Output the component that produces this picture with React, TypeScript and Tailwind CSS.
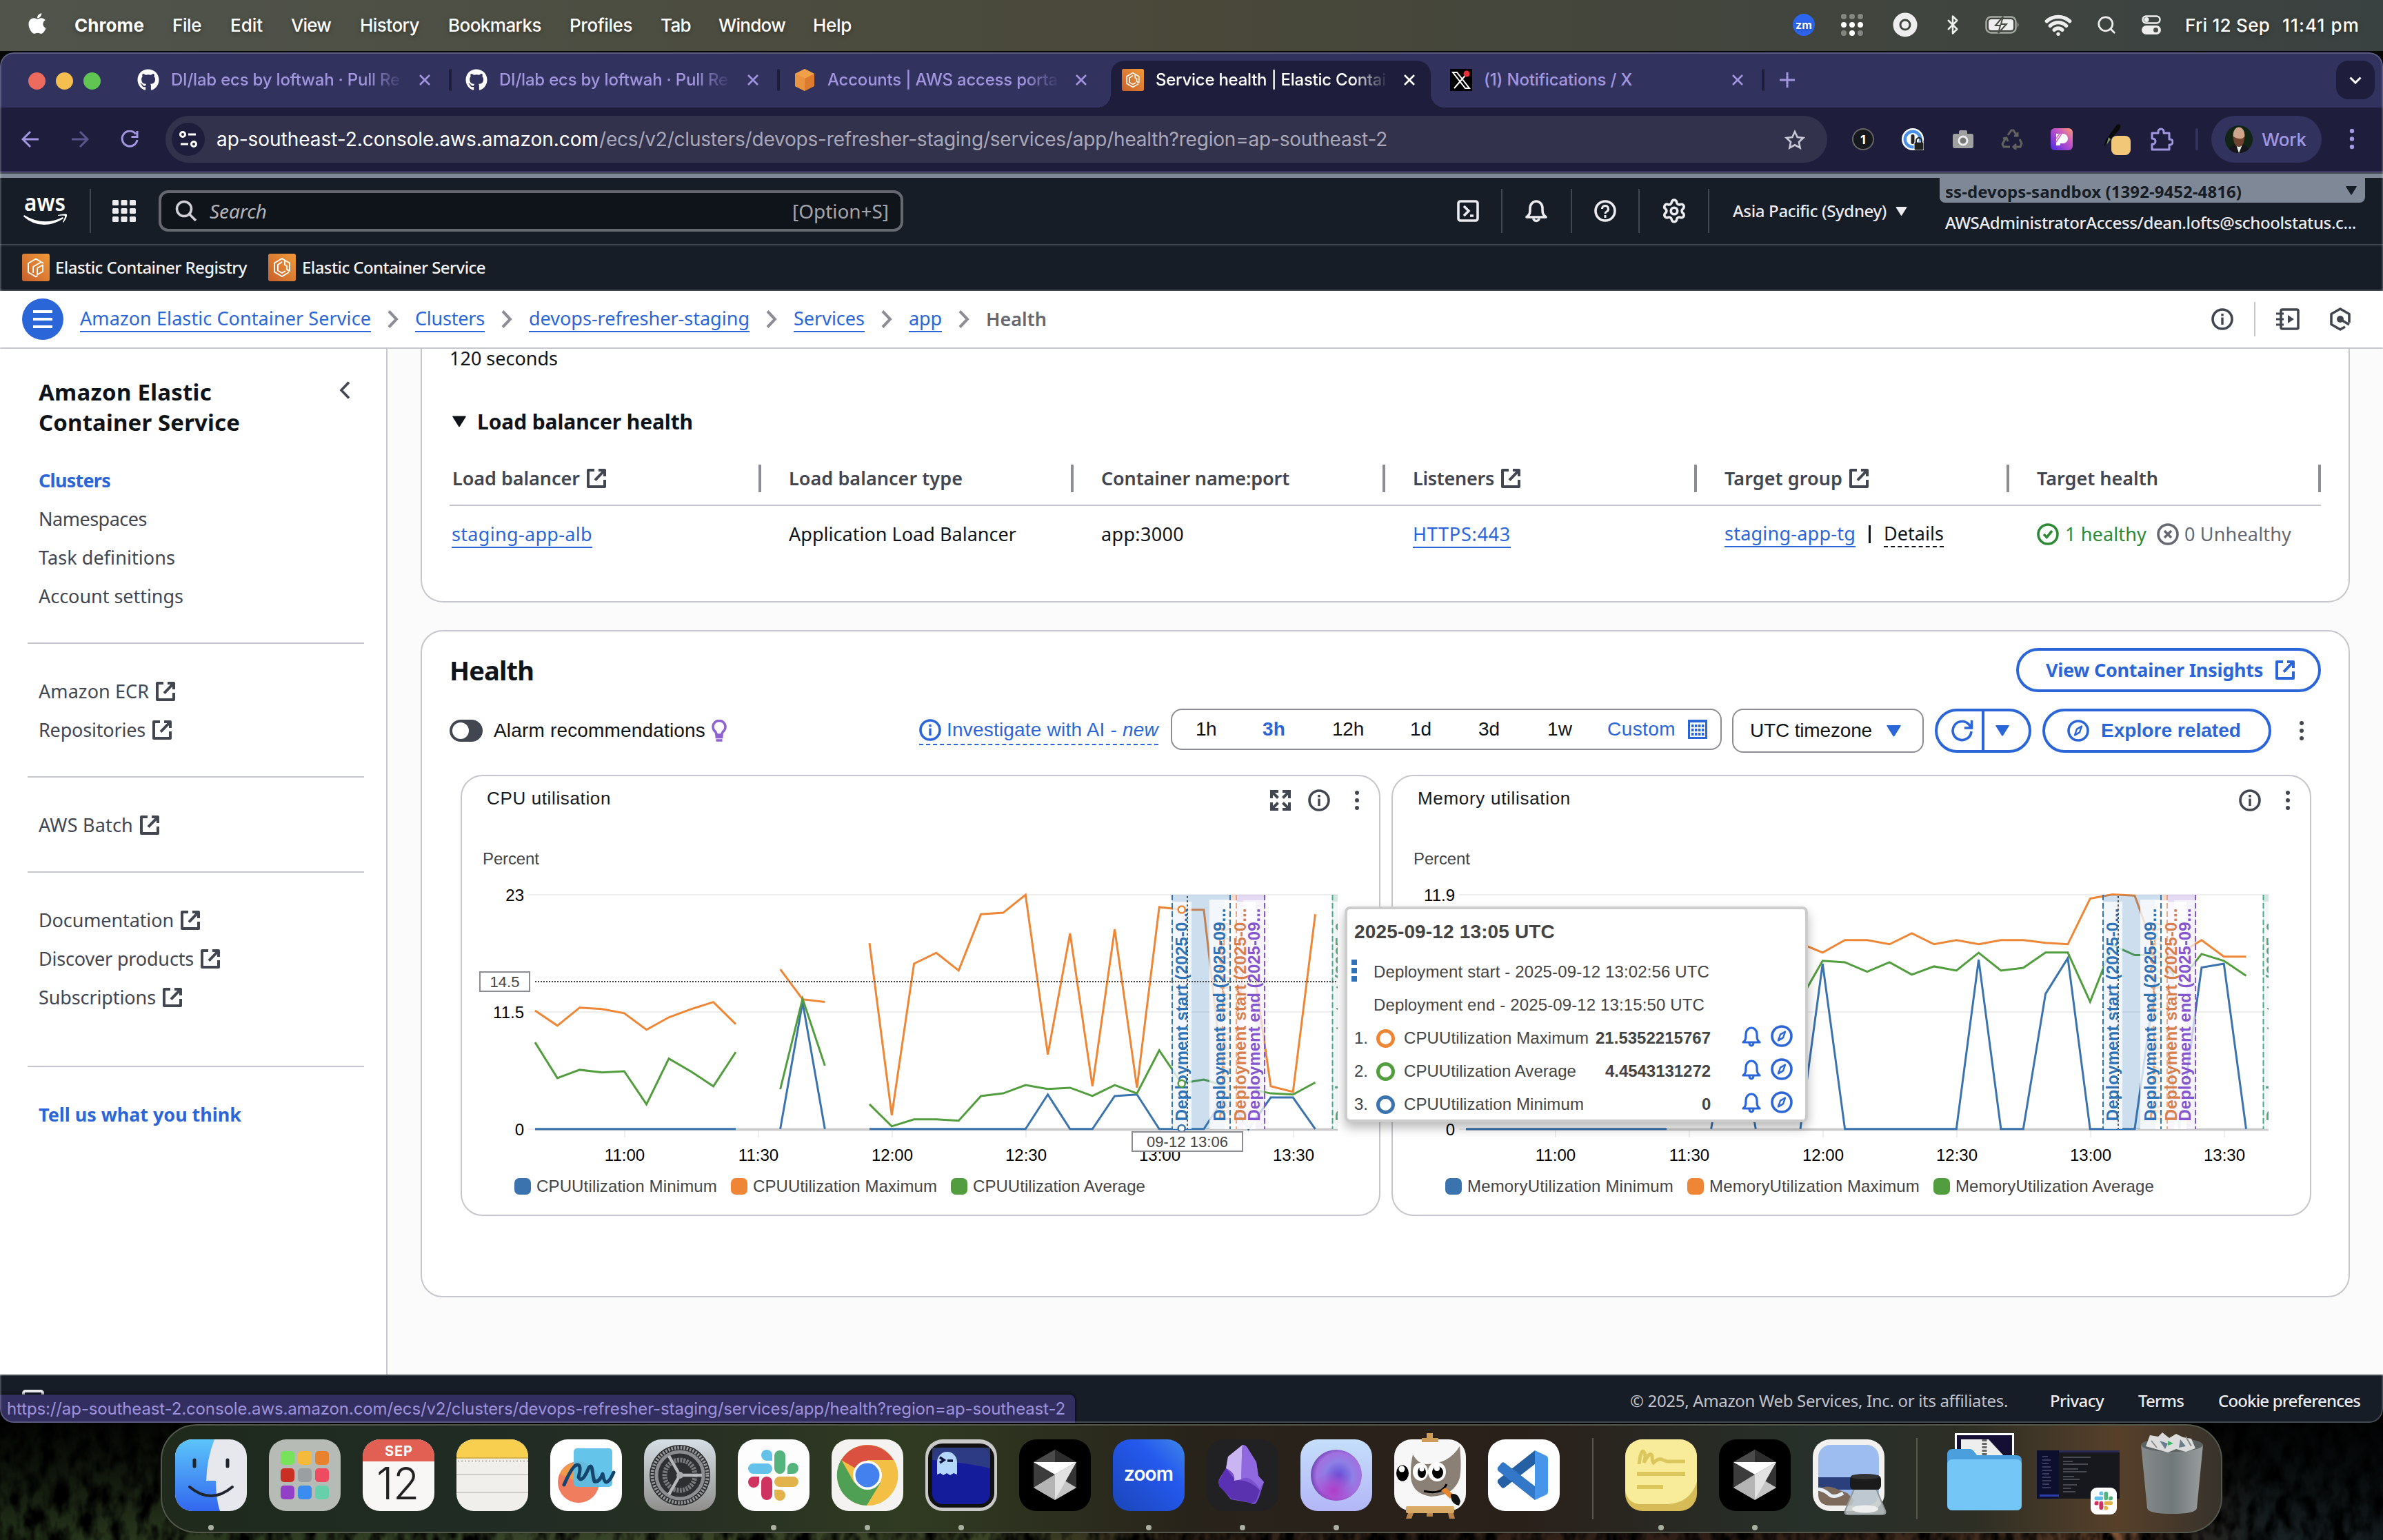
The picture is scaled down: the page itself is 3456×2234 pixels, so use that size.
import { useLayoutEffect, useRef } from "react";
import type { ReactNode } from "react";
import { FaApple, FaGithub } from "react-icons/fa";
import { Bluetooth, Search, Wifi, Settings } from "lucide-react";

type Kids = { children: ReactNode; className?: string };

/* Single line of text whose tracking is tuned to fill the width of its box. */
function T({ children, className = "" }: Kids) {
  const box = useRef<HTMLSpanElement>(null);
  const inner = useRef<HTMLSpanElement>(null);
  useLayoutEffect(() => {
    if (!box.current || !inner.current) return;
    inner.current.style.letterSpacing = "0px";
    const target = box.current.clientWidth;
    const natural = inner.current.getBoundingClientRect().width;
    const n = (inner.current.textContent || "").length;
    if (n > 1) inner.current.style.letterSpacing = `${(target - natural) / n}px`;
  }, []);
  return (
    <span ref={box} className={`inline-block shrink-0 whitespace-nowrap ${className}`}>
      <span ref={inner}>{children}</span>
    </span>
  );
}

/* ---------- small icons ---------- */

function External({ className = "" }: { className?: string }) {
  return (
    <svg viewBox="0 0 16 16" className={`h-[32px] w-[32px] shrink-0 ${className}`} fill="none" stroke="currentColor" strokeWidth="2">
      <path d="M9.500 2H14v4.500M7 9.300 13.600 2.400M14 9v5H2V2h4.500" strokeLinejoin="round" />
    </svg>
  );
}
function Info({ className = "" }: { className?: string }) {
  return (
    <svg viewBox="0 0 16 16" className={`h-[32px] w-[32px] shrink-0 ${className}`} fill="none" stroke="currentColor" strokeWidth="1.8">
      <circle cx="8" cy="8" r="7" />
      <path d="M8 6.8V12M8 4v1.7" strokeWidth="1.7" />
    </svg>
  );
}
function Kebab({ className = "" }: { className?: string }) {
  return (
    <svg viewBox="0 0 32 32" className={`h-[32px] w-[32px] shrink-0 ${className}`} fill="currentColor">
      <circle cx="16" cy="5" r="3" />
      <circle cx="16" cy="16" r="3" />
      <circle cx="16" cy="27" r="3" />
    </svg>
  );
}
function Compass({ className = "" }: { className?: string }) {
  return (
    <svg viewBox="0 0 16 16" className={`h-[32px] w-[32px] shrink-0 ${className}`} fill="none" stroke="currentColor" strokeWidth="1.8">
      <circle cx="8" cy="8" r="7" />
      <path d="M10.500 4.800 9 9.200 5.500 11.200 7 6.800z" strokeWidth="1.200" strokeLinejoin="round" />
    </svg>
  );
}
function Down({ className = "" }: { className?: string }) {
  return (
    <svg viewBox="0 0 20 16" className={`shrink-0 ${className}`} fill="currentColor">
      <path d="M1 0h18q1.2 0 .6 1.2L11 15q-1 1.4-2 0L.4 1.2Q-.2 0 1 0z" />
    </svg>
  );
}
function Chevron() {
  return (
    <svg viewBox="0 0 16 26" className="h-[26px] w-[16px] shrink-0 text-[#8c8c94]" fill="none" stroke="currentColor" strokeWidth="4">
      <path d="M2 1.500 13 13 2 24.500" />
    </svg>
  );
}
function EcsBadge({ kind, className = "" }: { kind: "ecr" | "ecs"; className?: string }) {
  return (
    <svg viewBox="0 0 40 40" className={`shrink-0 ${className}`} fill="none" stroke="#fff" strokeWidth="2" strokeLinejoin="round">
      <defs>
        <linearGradient id={`badge-${kind}`} x1="0" y1="1" x2="1" y2="0">
          <stop offset="0" stopColor="#c8602a" />
          <stop offset="1" stopColor="#f09a3a" />
        </linearGradient>
      </defs>
      <rect width="40" height="40" rx="3" fill={`url(#badge-${kind})`} stroke="none" />
      {kind === "ecr" ? (
        <path d="M31 14 20 7.500 9 14v13l11 6.500 2.500-1.500M16 28v-9l12-7M22 28v-7l8-4.500v9.500l-8 4.500z" />
      ) : (
        <path d="M24 9.500 20 7 9 13.500v13L20 33l10-6M31 25V13.500l-7-4v6.500l3 2v5zM20 12l-6 4v8.500l6 3.500 5-3" />
      )}
    </svg>
  );
}
function CloseX({ className = "" }: { className?: string }) {
  return (
    <svg viewBox="0 0 16 16" className={`h-[16px] w-[16px] shrink-0 ${className}`} stroke="currentColor" strokeWidth="2.600">
      <path d="M1 1l14 14M15 1 1 15" />
    </svg>
  );
}
function BellBlue() {
  return (
    <svg viewBox="0 0 28 32" className="h-[32px] w-[28px] shrink-0 text-[#2b66d9]" fill="none" stroke="currentColor" strokeWidth="3.200" strokeLinejoin="round">
      <path d="M2 25c4-3 4-6 4-12a8 9 0 0 1 16 0c0 6 0 9 4 12z" />
      <path d="M11 26a3 4 0 0 0 6 0" />
    </svg>
  );
}

/* ---------- macOS menu bar ---------- */

function MenuBar() {
  return (
    <div className="relative flex h-[74px] w-full shrink-0 items-center bg-gradient-to-r from-[#50544b] via-[#494839] to-[#3a4241] pb-[2px] font-['Inter',sans-serif] text-[26px] font-medium text-white [text-shadow:0_2px_6px_rgba(0,0,0,.35)]">
      <FaApple className="mb-[4px] ml-[38px] h-[34px] w-[32px]" />
      <T className="ml-[38px] w-[101px] font-bold">Chrome</T>
      <T className="ml-[41px] w-[42px]">File</T>
      <T className="ml-[42px] w-[47px]">Edit</T>
      <T className="ml-[41px] w-[58px]">View</T>
      <T className="ml-[42px] w-[86px]">History</T>
      <T className="ml-[42px] w-[135px]">Bookmarks</T>
      <T className="ml-[41px] w-[91px]">Profiles</T>
      <T className="ml-[41px] w-[44px]">Tab</T>
      <T className="ml-[40px] w-[97px]">Window</T>
      <T className="ml-[40px] w-[56px]">Help</T>
      <span className="ml-auto flex h-[32px] w-[32px] items-center justify-center rounded-full bg-[#2d66ee] text-[16px] font-bold">zm</span>
      <svg viewBox="0 0 34 34" className="ml-[37px] h-[34px] w-[34px]" fill="#fff">
        {[5, 17, 29].map((y) => [5, 17, 29].map((x) => <circle key={`${x}${y}`} cx={x} cy={y} r="4" opacity={y === 17 || (y === 29 && x === 17) ? 1 : 0.35} />))}
      </svg>
      <svg viewBox="0 0 36 36" className="ml-[42px] h-[36px] w-[36px]">
        <circle cx="18" cy="18" r="13" fill="none" stroke="#eee" strokeWidth="9" />
        <circle cx="18" cy="18" r="5.500" fill="#eee" />
      </svg>
      <Bluetooth className="ml-[36px] h-[32px] w-[30px] text-[#eee]" strokeWidth={2} />
      <svg viewBox="0 0 50 26" className="ml-[32px] h-[26px] w-[50px]">
        <rect x="1.500" y="1.500" width="43" height="23" rx="7" fill="none" stroke="#a5a7a2" strokeWidth="2.500" />
        <rect x="5" y="5" width="36" height="16" rx="4" fill="#eee" />
        <path d="M47 9q3 4 0 8z" fill="#a5a7a2" />
        <path d="M26 1 15 14h7l-3 11 12-13h-8z" fill="#eee" stroke="#454a43" strokeWidth="2" />
      </svg>
      <Wifi className="ml-[36px] h-[40px] w-[40px] text-[#eee]" strokeWidth={3.2} />
      <Search className="ml-[35px] h-[30px] w-[30px] text-[#eee]" strokeWidth={2.2} />
      <svg viewBox="0 0 28 28" className="ml-[36px] h-[28px] w-[28px]">
        <rect x="1.500" y="1.500" width="25" height="10" rx="5" fill="none" stroke="#eee" strokeWidth="2.400" />
        <circle cx="7" cy="6.500" r="3.500" fill="#eee" />
        <rect x="0" y="15" width="28" height="13" rx="6.500" fill="#eee" />
        <circle cx="20.500" cy="21.500" r="3.500" fill="#454a43" />
      </svg>
      <T className="ml-[35px] w-[123px]">Fri 12 Sep</T>
      <T className="ml-[18px] mr-[34px] w-[112px]">11:41 pm</T>
    </div>
  );
}

/* ---------- browser chrome ---------- */

function Tab({ icon, title, width, active, last }: { icon: ReactNode; title: string; width: string; active?: boolean; last?: boolean }) {
  return (
    <div className={`relative flex h-full w-[476px] shrink-0 items-center pl-[22px] ${active ? "text-white" : "text-[#a396e0]"}`}>
      {active && (
        <>
          <span className="absolute bottom-0 left-[6px] right-[6px] top-[10px] rounded-t-[20px] bg-[#1e1e3c]" />
          <span className="absolute bottom-0 left-[-14px] h-[20px] w-[20px] bg-[radial-gradient(circle_at_0_0,transparent_20px,#1e1e3c_20px)]" />
          <span className="absolute bottom-0 right-[-14px] h-[20px] w-[20px] bg-[radial-gradient(circle_at_100%_0,transparent_20px,#1e1e3c_20px)]" />
        </>
      )}
      <span className="relative -mt-[2px] flex h-[32px] w-[32px] items-center justify-center">{icon}</span>
      <span className={`relative -mt-[3px] ml-[17px] w-[334px] overflow-hidden ${last ? "" : "[mask-image:linear-gradient(to_right,#000_85%,transparent_101%)]"}`}>
        <T className={`${width} align-middle`}>{title}</T>
      </span>
      <CloseX className="relative -mt-[2px] ml-[26px]" />
    </div>
  );
}

function TabStrip() {
  const sep = <span className="-mx-[2px] -mt-[2px] h-[32px] w-[4px] shrink-0 rounded bg-[#1e1e3c]" />;
  return (
    <div className="flex h-[80px] shrink-0 items-center bg-[#32325f] pt-[2px] font-['Inter',sans-serif] text-[24px] font-medium">
      <span className="ml-[41px] h-[25px] w-[25px] rounded-full bg-[#ed6a5e]" />
      <span className="ml-[15px] h-[25px] w-[25px] rounded-full bg-[#f5bf4f]" />
      <span className="ml-[15px] mr-[31px] h-[25px] w-[25px] rounded-full bg-[#61c554]" />
      <Tab icon={<FaGithub className="h-[32px] w-[32px] text-white" />} title="DI/lab ecs by loftwah · Pull Re" width="w-[332px]" />
      {sep}
      <Tab icon={<FaGithub className="h-[32px] w-[32px] text-white" />} title="DI/lab ecs by loftwah · Pull Re" width="w-[332px]" />
      {sep}
      <Tab
        icon={
          <svg viewBox="0 0 32 32" className="h-[32px] w-[32px]">
            <path d="M16 0 30 7v18l-14 7-14-7V7z" fill="#dd7c2e" />
            <path d="M16 0 30 7l-14 7L2 7z" fill="#f0a048" />
            <path d="M16 14 2 7v18l14 7z" fill="#ea9340" />
          </svg>
        }
        title="Accounts | AWS access porta"
        width="w-[334px]"
      />
      <Tab active icon={<EcsBadge kind="ecs" className="h-[32px] w-[32px]" />} title="Service health | Elastic Contai" width="w-[334px]" />
      <Tab
        last
        icon={
          <svg viewBox="0 0 32 32" className="h-[32px] w-[32px]">
            <rect width="32" height="32" fill="#000" />
            <path d="M4 5h6l18 23h-6zM26 5 6 28" stroke="#fff" strokeWidth="2" fill="none" />
            <circle cx="24" cy="7" r="4.500" fill="#e5333c" />
          </svg>
        }
        title="(1) Notifications / X"
        width="w-[215px]"
      />
      {sep}
      <svg viewBox="0 0 22 22" className="-mt-[2px] ml-[24px] h-[22px] w-[22px]" stroke="#a396e0" strokeWidth="3">
        <path d="M11 0v22M0 11h22" />
      </svg>
      <span className="-mt-[2px] ml-auto mr-[12px] flex h-[56px] w-[56px] items-center justify-center rounded-[18px] bg-[#1e1e3c]">
        <svg viewBox="0 0 18 11" className="h-[11px] w-[18px]" fill="none" stroke="#fff" strokeWidth="3">
          <path d="m1.500 1.500 7.500 7.500 7.500-7.500" />
        </svg>
      </span>
    </div>
  );
}

function Toolbar() {
  return (
    <div className="flex h-[92px] shrink-0 items-center bg-[#1e1e3c] font-['Inter',sans-serif]">
      <svg viewBox="0 0 26 26" className="ml-[31px] h-[26px] w-[26px]" fill="none" stroke="#a396e0" strokeWidth="3">
        <path d="M25 13H2M13 2 2 13l11 11" />
      </svg>
      <svg viewBox="0 0 26 26" className="ml-[46px] h-[26px] w-[26px]" fill="none" stroke="#5c5690" strokeWidth="3">
        <path d="M1 13h23M13 2l11 11-11 11" />
      </svg>
      <svg viewBox="0 0 26 26" className="ml-[46px] h-[26px] w-[26px]" fill="none" stroke="#a396e0" strokeWidth="3">
        <path d="M22 5.500A11 11 0 1 0 24 14M24 1v8.500h-8.500" />
      </svg>
      <div className="ml-[39px] flex h-[68px] w-[2410px] shrink-0 items-center rounded-full bg-[#33324d] pl-[9px]">
        <span className="flex h-[48px] w-[48px] items-center justify-center rounded-full bg-[#1e1e3c]">
          <svg viewBox="0 0 28 24" className="h-[24px] w-[28px]" fill="none" stroke="#fff" strokeWidth="3">
            <circle cx="6" cy="5" r="3.500" />
            <path d="M14 5h11M3 19h11" />
            <circle cx="22" cy="19" r="3.500" />
          </svg>
        </span>
        <T className="ml-[17px] w-[554px] text-[28px] text-white">ap-southeast-2.console.aws.amazon.com</T>
        <T className="ml-[1px] w-[1143px] text-[28px] text-[#a9a8b8]">/ecs/v2/clusters/devops-refresher-staging/services/app/health?region=ap-southeast-2</T>
        <svg viewBox="0 0 30 29" className="ml-auto mr-[32px] h-[29px] w-[30px]" fill="none" stroke="#c9c8d4" strokeWidth="2.600">
          <path d="m15 3 3.700 8 8.500 1-6.300 6 1.700 8.500L15 22.300 7.400 26.500 9.100 18l-6.300-6 8.500-1z" />
        </svg>
      </div>
      <span className="ml-[36px] flex h-[32px] w-[32px] items-center justify-center rounded-full border-2 border-[#666] bg-[#15181c] text-[18px] font-bold text-white">1</span>
      <svg viewBox="0 0 32 32" className="ml-[40px] h-[32px] w-[32px]">
        <circle cx="16" cy="16" r="16" fill="#fff" />
        <circle cx="16" cy="16" r="11" fill="none" stroke="#4a90e8" strokeWidth="5" />
        <circle cx="16" cy="16" r="9" fill="#fff" />
        <rect x="13.500" y="9" width="5" height="14" rx="2" fill="#222" />
        <rect x="18" y="20" width="14" height="12" rx="2" fill="#222" stroke="#fff" />
        <path d="M21 21v-3a4 4 0 0 1 8 0v3" fill="none" stroke="#222" strokeWidth="2" />
      </svg>
      <svg viewBox="0 0 30 28" className="ml-[42px] h-[28px] w-[30px]">
        <rect y="6" width="30" height="21" rx="3" fill="#a0a0a0" />
        <rect x="9" y="1" width="12" height="8" rx="2" fill="#a0a0a0" />
        <circle cx="15" cy="16" r="6" fill="#777" stroke="#eee" strokeWidth="3" />
      </svg>
      <svg viewBox="0 0 32 30" className="ml-[40px] h-[30px] w-[32px]" fill="none" stroke="#62625f" strokeWidth="3">
        <path d="m10 9 5-7h3l5 8M19 10h5V5M27 15l3 6-2 5h-9M22 22l-4 4 4 4M13 26H4l-2-4 5-9M3 14l5-1 2 5" />
      </svg>
      <svg viewBox="0 0 32 32" className="ml-[40px] h-[32px] w-[32px]">
        <defs>
          <linearGradient id="pg" x1="0" y1="1" x2="1" y2="0">
            <stop offset="0" stopColor="#4a2be0" />
            <stop offset=".6" stopColor="#c654c8" />
            <stop offset="1" stopColor="#ffa06a" />
          </linearGradient>
        </defs>
        <rect width="32" height="32" rx="6" fill="url(#pg)" />
        <path d="M8 25V8h10a7 7 0 0 1 0 14h-4v3z" fill="#fff" />
        <path d="m8 15 5-7M8 20l8-12" stroke="#d060c0" strokeWidth="1.500" />
      </svg>
      <svg viewBox="0 0 44 46" className="ml-[42px] h-[46px] w-[44px]">
        <path d="M22 2q4-2 5 1t-3 8L8 28l-5 6 3-10z" fill="#0a0a0a" />
        <path d="m10 20 3 3-6 8z" fill="#7a9a6a" />
        <rect x="14" y="18" width="28" height="28" rx="8" fill="#f2c777" />
      </svg>
      <svg viewBox="0 0 34 34" className="ml-[26px] h-[34px] w-[34px]" fill="none" stroke="#a396e0" strokeWidth="3" strokeLinejoin="round">
        <path d="M3 8h9V6a4 4 0 0 1 8 0v2h8v9h1a4 4 0 0 1 0 8h-1v7H3v-8h1a4 4 0 0 0 0-8H3z" />
      </svg>
      <span className="ml-[32px] h-[32px] w-[4px] rounded bg-[#32325f]" />
      <div className="ml-[19px] flex h-[68px] w-[160px] items-center rounded-full bg-[#32325f] pl-[20px]">
        <svg viewBox="0 0 40 40" className="h-[40px] w-[40px]">
          <defs>
            <clipPath id="av">
              <circle cx="20" cy="20" r="20" />
            </clipPath>
          </defs>
          <g clipPath="url(#av)">
            <rect width="40" height="40" fill="#122413" />
            <path d="M4 40q2-13 16-13t16 13z" fill="#15161c" />
            <path d="m16 28 4 12 5-12z" fill="#e8f0e8" />
            <ellipse cx="20" cy="14" rx="8.500" ry="11.500" fill="#cfa58c" />
            <path d="M11.500 15q1 16 8.500 16t8.500-16q-2 5-8.500 4t-8.500-4z" fill="#6e4431" />
          </g>
        </svg>
        <T className="ml-[13px] w-[65px] text-[26px] font-medium text-[#a396e0]">Work</T>
      </div>
      <svg viewBox="0 0 8 32" className="ml-[40px] h-[32px] w-[8px]" fill="#a396e0">
        <circle cx="4" cy="4" r="3.200" />
        <circle cx="4" cy="15.500" r="3.200" />
        <circle cx="4" cy="27" r="3.200" />
      </svg>
    </div>
  );
}

/* ---------- AWS console ---------- */

function Divider({ className }: { className: string }) {
  return <span className={`h-[64px] w-[2px] shrink-0 bg-[#424650] ${className}`} />;
}

function AwsHeader() {
  return (
    <div className="flex h-[96px] shrink-0 items-center bg-[#161d26] text-[#ebebf0]">
      <svg viewBox="0 0 64 42" className="ml-[34px] h-[42px] w-[64px] shrink-0 overflow-visible">
        <text x="1" y="21" textLength="60" lengthAdjust="spacingAndGlyphs" fontSize="34" fontWeight="600" fill="#fff" fontFamily="Noto Sans, sans-serif">
          aws
        </text>
        <path d="M1 27q28 17 56 3l1 2q-14 9-28 9Q13 41 0 29z" fill="#fff" />
        <path d="M50 27q12-3 13-1 1 3-5 12l-1-1q4-8 3-9-2-1-10 0z" fill="#fff" />
      </svg>
      <Divider className="ml-[32px]" />
      <svg viewBox="0 0 34 32" className="ml-[31px] h-[32px] w-[34px] shrink-0" fill="#ebebf0">
        {[0, 12, 24].map((y) => [0, 12.5, 25].map((x) => <rect key={`${x}-${y}`} x={x} y={y} width="9" height="8" rx="1.500" />))}
      </svg>
      <div className="ml-[33px] flex h-[60px] w-[1080px] shrink-0 items-center rounded-[14px] border-4 border-[#656871] bg-[#0f141a] text-[28px]">
        <svg viewBox="0 0 32 32" className="ml-[20px] h-[32px] w-[32px]" fill="none" stroke="#d0d0d6" strokeWidth="3.600">
          <circle cx="13" cy="13" r="10.500" />
          <path d="m20 20 10 10" />
        </svg>
        <T className="ml-[18px] w-[83px] italic text-[#b4b4bb]">Search</T>
        <T className="ml-auto mr-[17px] w-[140px] text-[#a4a4ad]">[Option+S]</T>
      </div>
      <svg viewBox="0 0 32 32" className="ml-auto h-[32px] w-[32px] shrink-0" fill="none" stroke="currentColor" strokeWidth="3.600">
        <rect x="2" y="2" width="28" height="28" rx="3" />
        <path d="m10 9 7 7-7 7M19 23h5" />
      </svg>
      <Divider className="ml-[32px]" />
      <svg viewBox="0 0 32 34" className="ml-[33px] h-[34px] w-[32px] shrink-0" fill="none" stroke="currentColor" strokeWidth="3.600" strokeLinejoin="round">
        <path d="M2 26c5-4 5-6 5-13a9 10 0 0 1 18 0c0 7 0 9 5 13z" />
        <path d="M12 28a4 3.500 0 0 0 8 0" />
      </svg>
      <Divider className="ml-[34px]" />
      <svg viewBox="0 0 32 32" className="ml-[32px] h-[32px] w-[32px] shrink-0" fill="none" stroke="currentColor" strokeWidth="3.600">
        <circle cx="16" cy="16" r="14" />
        <path d="M11.500 13a4.500 4.500 0 1 1 6.500 4q-2 1-2 3M16 22v4" strokeWidth="3" />
      </svg>
      <Divider className="ml-[32px]" />
      <Settings className="ml-[31px] h-[38px] w-[38px] shrink-0" strokeWidth={2.3} />
      <Divider className="ml-[30px]" />
      <T className="ml-[34px] w-[223px] text-[24px] font-medium">Asia Pacific (Sydney)</T>
      <Down className="ml-[13px] h-[13px] w-[17px]" />
      <div className="ml-[47px] mr-[26px] flex h-full w-[617px] shrink-0 flex-col text-[24px]">
        <div className="flex h-[36px] shrink-0 items-center rounded-b-[8px] bg-[#7f8896] pl-[8px] text-[#161d26]">
          <T className="mt-[3px] w-[430px] font-bold">ss-devops-sandbox (1392-9452-4816)</T>
          <Down className="ml-auto mr-[12px] h-[13px] w-[16px]" />
        </div>
        <T className="ml-[8px] mt-[11px] w-[596px] font-medium">AWSAdministratorAccess/dean.lofts@schoolstatus.c...</T>
      </div>
    </div>
  );
}

function Favourites() {
  return (
    <div className="flex h-[66px] shrink-0 items-center border-t-2 border-[#424650] bg-[#161d26] text-[24px] font-medium text-[#f3f3f7]">
      <EcsBadge kind="ecr" className="ml-[32px] h-[40px] w-[40px]" />
      <T className="ml-[8px] w-[278px]">Elastic Container Registry</T>
      <EcsBadge kind="ecs" className="ml-[31px] h-[40px] w-[40px]" />
      <T className="ml-[9px] w-[266px]">Elastic Container Service</T>
    </div>
  );
}

function Crumb({ children, className }: Kids) {
  return <T className={`border-b-2 border-[#2b66d9] leading-[36px] text-[#2b66d9] ${className}`}>{children}</T>;
}

function Breadcrumbs() {
  return (
    <div className="flex h-[86px] shrink-0 items-center border-b-2 border-t-2 border-b-[#c6c6cd] border-t-[#424650] bg-white text-[27px]">
      <span className="ml-[32px] flex h-[60px] w-[60px] shrink-0 flex-col items-center justify-center gap-[7px] rounded-full bg-[#2b66d9]">
        <span className="h-[4px] w-[28px] bg-white" />
        <span className="h-[4px] w-[28px] bg-white" />
        <span className="h-[4px] w-[28px] bg-white" />
      </span>
      <div className="ml-[24px] flex items-center gap-[24px]">
        <Crumb className="w-[422px]">Amazon Elastic Container Service</Crumb>
        <Chevron />
        <Crumb className="w-[101px]">Clusters</Crumb>
        <Chevron />
        <Crumb className="w-[320px]">devops-refresher-staging</Crumb>
        <Chevron />
        <Crumb className="w-[103px]">Services</Crumb>
        <Chevron />
        <Crumb className="w-[48px]">app</Crumb>
        <Chevron />
        <T className="w-[88px] font-semibold text-[#656871]">Health</T>
      </div>
      <div className="ml-auto mr-[46px] flex items-center text-[#424650]">
        <Info />
        <span className="ml-[30px] h-[50px] w-[2px] bg-[#c6c6cd]" />
        <svg viewBox="0 0 34 32" className="ml-[30px] h-[32px] w-[34px]" fill="none" stroke="currentColor" strokeWidth="3.600">
          <rect x="7" y="2" width="25" height="28" rx="2" />
          <path d="M0 8h11M0 16h11M0 24h11" strokeWidth="3" />
          <path d="m17 10 9 6-9 6z" fill="currentColor" stroke="none" />
        </svg>
        <svg viewBox="0 0 32 34" className="ml-[43px] h-[34px] w-[32px]" fill="none" stroke="currentColor" strokeWidth="3.600" strokeLinejoin="round">
          <path d="M29 22V9.500L16 2 3 9.500v15L16 32l7-4" />
          <circle cx="16" cy="17" r="5" fill="currentColor" stroke="none" />
          <path d="m16 17 13 8" />
        </svg>
      </div>
    </div>
  );
}

function SideLink({ children, className, external }: Kids & { external?: boolean }) {
  return (
    <div className="flex h-[56px] items-center pl-[56px] text-[#424650]">
      <T className={className}>{children}</T>
      {external && <External className="ml-[8px]" />}
    </div>
  );
}
function Rule({ className }: { className: string }) {
  return <div className={`ml-[40px] h-[2px] w-[488px] bg-[#c6c6cd] ${className}`} />;
}

function Sidebar() {
  return (
    <div className="flex w-[562px] shrink-0 flex-col border-r-2 border-[#c6c6cd] bg-white text-[27px]">
      <div className="mt-[41px] flex items-start pl-[56px]">
        <div className="flex flex-col text-[33px] font-bold leading-[44px] text-[#0f141a]">
          <T className="w-[251px]">Amazon Elastic</T>
          <T className="w-[292px]">Container Service</T>
        </div>
        <svg viewBox="0 0 16 26" className="ml-auto mr-[52px] mt-[6px] h-[26px] w-[16px] text-[#424650]" fill="none" stroke="currentColor" strokeWidth="3.600">
          <path d="M14 1.500 3 13l11 11.500" />
        </svg>
      </div>
      <div className="mt-[34px] flex flex-col">
        <SideLink className="w-[104px] font-bold text-[#2b66d9]">Clusters</SideLink>
        <SideLink className="w-[157px]">Namespaces</SideLink>
        <SideLink className="w-[198px]">Task definitions</SideLink>
        <SideLink className="w-[210px]">Account settings</SideLink>
      </div>
      <Rule className="mt-[39px]" />
      <div className="mt-[41px] flex flex-col">
        <SideLink external className="w-[160px]">Amazon ECR</SideLink>
        <SideLink external className="w-[155px]">Repositories</SideLink>
      </div>
      <Rule className="mt-[39px]" />
      <div className="mt-[41px] flex flex-col">
        <SideLink external className="w-[137px]">AWS Batch</SideLink>
      </div>
      <Rule className="mt-[39px]" />
      <div className="mt-[41px] flex flex-col">
        <SideLink external className="w-[196px]">Documentation</SideLink>
        <SideLink external className="w-[225px]">Discover products</SideLink>
        <SideLink external className="w-[170px]">Subscriptions</SideLink>
      </div>
      <Rule className="mt-[71px]" />
      <div className="mt-[41px] flex flex-col">
        <SideLink className="w-[294px] font-bold text-[#2b66d9]">Tell us what you think</SideLink>
      </div>
    </div>
  );
}

function Head({ children, className, external }: Kids & { external?: boolean }) {
  return (
    <div className="flex h-[76px] items-center border-r-4 border-transparent">
      <T className={className}>{children}</T>
      {external && <External className="ml-[8px]" />}
      <span className="-mr-[4px] ml-auto h-[40px] w-[4px] bg-[#8c8c94]" />
    </div>
  );
}

function LoadBalancerCard() {
  const cols = "grid grid-cols-[452px_453px_452px_452px_453px_452px]";
  return (
    <div className="flex h-[368px] w-[2798px] flex-col rounded-b-[32px] border-2 border-t-0 border-[#c6c6cd] bg-white pl-[40px] text-[27px] text-[#0f141a]">
      <div className="flex h-[28px] items-center">
        <T className="w-[157px]">120 seconds</T>
      </div>
      <div className="mt-[55px] flex h-[44px] items-center">
        <Down className="ml-[4px] h-[17px] w-[20px]" />
        <T className="ml-[16px] w-[313px] text-[30px] font-bold">Load balancer health</T>
      </div>
      <div className={`mt-[23px] w-[2714px] border-b-2 border-[#c6c6cd] font-semibold text-[#424650] ${cols}`}>
        <Head external className="ml-[4px] w-[185px]">Load balancer</Head>
        <Head className="ml-[40px] w-[252px]">Load balancer type</Head>
        <Head className="ml-[40px] w-[273px]">Container name:port</Head>
        <Head external className="ml-[40px] w-[118px]">Listeners</Head>
        <Head external className="ml-[40px] w-[171px]">Target group</Head>
        <Head className="ml-[40px] w-[176px]">Target health</Head>
      </div>
      <div className={`h-[82px] items-center ${cols}`}>
        <div className="pl-[3px]">
          <Crumb className="w-[204px]">staging-app-alb</Crumb>
        </div>
        <div className="pl-[40px]">
          <T className="w-[330px]">Application Load Balancer</T>
        </div>
        <div className="pl-[40px]">
          <T className="w-[120px]">app:3000</T>
        </div>
        <div className="pl-[40px]">
          <Crumb className="w-[142px]">HTTPS:443</Crumb>
        </div>
        <div className="flex items-center pl-[40px]">
          <Crumb className="w-[190px]">staging-app-tg</Crumb>
          <span className="ml-[19px] h-[26px] w-[3px] bg-[#0f141a]" />
          <T className="ml-[19px] w-[87px] border-b-2 border-dashed border-[#0f141a] leading-[36px]">Details</T>
        </div>
        <div className="flex items-center whitespace-nowrap pl-[40px] text-[#656871]">
          <svg viewBox="0 0 16 16" className="h-[32px] w-[32px] shrink-0 text-[#2b8a34]" fill="none" stroke="currentColor" strokeWidth="1.800">
            <circle cx="8" cy="8" r="7" />
            <path d="m5 8 2.200 2.200L11 5.500" />
          </svg>
          <T className="ml-[9px] w-[118px] text-[#2b8a34]">1 healthy</T>
          <svg viewBox="0 0 16 16" className="ml-[15px] h-[32px] w-[32px] shrink-0" fill="none" stroke="currentColor" strokeWidth="1.800">
            <circle cx="8" cy="8" r="7" />
            <path d="m5.500 5.500 5 5M10.500 5.500l-5 5" />
          </svg>
          <T className="ml-[8px] w-[155px]">0 Unhealthy</T>
        </div>
      </div>
    </div>
  );
}

/* ---------- charts ---------- */

const X0 = 776;
const STEP = 32.33;
const BASE = 1638;
const yOf = (v: number) => Math.min(1110 + v / 2.34, BASE);
type Series = { color: string; runs: [number, number[]][] };

const BLUE = "#3b73af";
const ORANGE = "#ee8636";
const GREEN = "#529d3e";

const cpu: Series[] = [
  {
    color: BLUE,
    runs: [
      [0, [1235, 1235, 1235, 1235, 1235, 1235, 1235, 1235, 1235, 1235]],
      [11, [1235, 805, 1235]],
      [15, [1235, 1235, 1235, 1235, 1235, 1235, 1235, 1235, 1118, 1235, 1235, 1123, 1118, 1235, 1235, 1235, 1118, 1240, 1128, 1128, 1235]],
    ],
  },
  {
    color: ORANGE,
    runs: [
      [0, [833, 884, 823, 828, 842, 898, 856, 828, 804, 879]],
      [11, [693, 795, 804]],
      [15, [604, 1188, 674, 637, 697, 506, 501, 440, 982, 571, 1090, 557, 1095, 482, 490, 491, 1147, 566, 1090, 1109, 506]],
    ],
  },
  {
    color: GREEN,
    runs: [
      [0, [941, 1062, 1034, 1043, 1039, 1151, 996, 1040, 1090, 974]],
      [11, [1100, 793, 1020]],
      [15, [1151, 1226, 1202, 1202, 1207, 1123, 1114, 1086, 1099, 1095, 1123, 1086, 1114, 968, 1080, 1067, 1090, 1098, 1114, 1118, 1077]],
    ],
  },
];

const memory: Series[] = [
  {
    color: BLUE,
    runs: [
      [0, [1235, 1235, 1235, 1235, 1235, 1235, 1235, 1235, 1235, 1235]],
      [11, [1235, 805, 1235]],
      [15, [1235, 674, 1235, 1235, 1235, 1235, 1235, 1235, 660, 1235, 1235, 776, 655, 1235, 1235, 1235, 700, 1235, 687, 674, 1235]],
    ],
  },
  {
    color: ORANGE,
    runs: [[15, [605, 636, 594, 594, 608, 571, 608, 594, 608, 594, 594, 603, 608, 453, 439, 443, 650, 640, 594, 650, 650]]],
  },
  {
    color: GREEN,
    runs: [[15, [796, 664, 669, 701, 669, 711, 683, 697, 637, 697, 688, 636, 636, 803, 611, 645, 645, 735, 641, 664, 715]]],
  },
];

function VLabel({ x, color, text, opacity = 1 }: { x: number; color: string; text: string; opacity?: number }) {
  return (
    <text transform={`translate(${x} 1626.500) rotate(-90)`} fill={color} opacity={opacity} fontSize="24.500" fontWeight="700" textLength="309" lengthAdjust="spacingAndGlyphs">
      {text}
    </text>
  );
}

function Chart({ series, top, mid, cross }: { series: Series[]; top: string; mid?: string; cross?: boolean }) {
  const start = "Deployment start (2025-0...";
  const end = "Deployment end (2025-09...";
  const clip = cross ? "plotA" : "plotB";
  return (
    <svg viewBox="670 1196 1330 504" className="h-[504px] w-[1330px] shrink-0" fontFamily="Liberation Sans, Arial, sans-serif">
      <defs>
        <clipPath id={clip}>
          <rect x="770" y="1290" width="1170" height="352" />
        </clipPath>
      </defs>
      <text x="700" y="1254" fontSize="24" fill="#444" textLength="82">
        Percent
      </text>
      <g fill="#000" fontSize="24" textAnchor="end">
        <text x="760" y="1306.500">{top}</text>
        {mid && (
          <text x="760" y="1476.500">{mid}</text>
        )}
        <text x="760" y="1646.500">0</text>
      </g>
      <g stroke="#eee" strokeWidth="2">
        <path d="M766 1298H1940M766 1468H1940M766 1638H776" />
        {[0, 1, 2, 3, 4, 5].map((i) => (
          <path key={i} d={`M${906 + i * 194} 1640v10`} />
        ))}
      </g>
      <path d="M776 1638.500H1940" stroke="#c8c8c8" strokeWidth="3.500" />
      <g fontSize="24" fill="#000" textAnchor="middle">
        {["11:00", "11:30", "12:00", "12:30", "13:00", "13:30"].map((t, i) => (
          <text key={t} x={906 + i * 194} y="1683.500">
            {t}
          </text>
        ))}
      </g>
      <g clipPath={`url(#${clip})`}>
        {series.map((s) =>
          s.runs.map(([first, values]) => (
            <polyline
              key={s.color + first}
              fill="none"
              stroke={s.color}
              strokeWidth="3"
              points={values.map((v, k) => `${(X0 + (first + k) * STEP).toFixed(1)},${yOf(v).toFixed(1)}`).join(" ")}
            />
          ))
        )}
        <rect x="1700" y="1298" width="84" height="340" fill="#2e73b8" opacity=".24" />
        <rect x="1785" y="1298" width="8" height="340" fill="#e07941" opacity=".25" />
        <rect x="1793" y="1298" width="41" height="340" fill="#8456ce" opacity=".22" />
        <rect x="1932" y="1298" width="8" height="340" fill="#4fa590" opacity=".25" />
        <rect x="1701" y="1308" width="27" height="330" fill="#fff" opacity=".76" />
        <rect x="1754" y="1305" width="30" height="333" fill="#fff" opacity=".76" />
        <VLabel x={1785} color="#dd8855" text={start} opacity={0.75} />
        <VLabel x={1816} color="#8456ce" text={start} opacity={0.5} />
        <rect x="1776" y="1306" width="18" height="332" fill="#fff" opacity=".72" />
        <rect x="1785" y="1308" width="36" height="330" fill="#fff" opacity=".78" />
        <rect x="1803" y="1306" width="30" height="332" fill="#fff" opacity=".68" />
        <rect x="1933" y="1308" width="8" height="330" fill="#fff" opacity=".7" />
        <g strokeWidth="2" strokeDasharray="8 4">
          <path d="M1700 1298V1638" stroke="#2e73b8" />
          <path d="M1784 1298V1638" stroke="#2e73b8" />
          <path d="M1793 1298V1638" stroke="#e07941" opacity=".6" />
          <path d="M1834 1298V1638" stroke="#8456ce" />
          <path d="M1932.500 1298V1638" stroke="#4fa590" />
        </g>
        <VLabel x={1721.500} color="#2e73b8" text={start} />
        <VLabel x={1776.500} color="#2e73b8" text={end} />
        <VLabel x={1806.500} color="#d67f4c" text={start} />
        <VLabel x={1826.500} color="#8456ce" text={end} />
        <VLabel x={1954} color="#4fa590" text={start} />
      </g>
      <path d="M1722 1300V1638" stroke="#444" strokeWidth="1.800" strokeDasharray="3 3" />
      {cross && (
        <>
          <path d="M776 1424H1938" stroke="#444" strokeWidth="1.800" strokeDasharray="2 2" />
          <g fill="#fff" strokeWidth="2.500">
            <circle cx="1713.700" cy="1319.500" r="5" stroke={ORANGE} />
            <circle cx="1713.700" cy="1572" r="5" stroke={GREEN} />
            <circle cx="1713.700" cy="1637" r="5" stroke={BLUE} />
          </g>
          <g fill="#fff" stroke="#8c8c94" strokeWidth="2">
            <rect x="696" y="1410" width="72" height="28" />
            <rect x="1642" y="1642" width="160" height="28" />
          </g>
          <g fill="#444" fontSize="22" textAnchor="middle">
            <text x="732" y="1432">14.5</text>
            <text x="1722" y="1664" textLength="118">09-12 13:06</text>
          </g>
        </>
      )}
    </svg>
  );
}

function Widget({ title, titleClass, expand, legend, children }: { title: string; titleClass: string; expand?: boolean; legend: [string, string, string][]; children: ReactNode }) {
  return (
    <div className="flex h-[640px] w-[1334px] shrink-0 flex-col rounded-[32px] border-2 border-[#c6c6cd] bg-white">
      <div className="flex h-[70px] shrink-0 items-center text-[#424650]">
        <T className={`-mt-[5px] ml-[36px] text-[26px] text-[#16191f] ${titleClass}`}>{title}</T>
        <span className="ml-auto" />
        {expand && (
          <svg viewBox="0 0 30 30" className="mr-[25px] h-[30px] w-[30px]" fill="none" stroke="currentColor" strokeWidth="4">
            <path d="M2 12V2h10M18 2h10v10M28 18v10H18M12 28H2V18M3 3l8.500 8.500M27 3l-8.500 8.500M27 27l-8.500-8.500M3 27l8.500-8.500" />
          </svg>
        )}
        <Info className="mr-[23px]" />
        <Kebab className="mr-[16px]" />
      </div>
      {children}
      <div className="flex h-[42px] items-center pl-[76px] text-[24px] text-[#444]">
        {legend.map(([name, swatch, w]) => (
          <span key={name} className="mr-[20px] flex items-center">
            <span className={`h-[24px] w-[24px] rounded-[7px] ${swatch}`} />
            <T className={`ml-[8px] ${w}`}>{name}</T>
          </span>
        ))}
      </div>
    </div>
  );
}

function TooltipRow({ n, ring, name, nameClass, value, valueClass }: { n: string; ring: string; name: string; nameClass: string; value: string; valueClass: string }) {
  return (
    <div className="flex h-[48px] shrink-0 items-center">
      <span className="w-[32px] shrink-0">{n}</span>
      <span className={`h-[27px] w-[27px] shrink-0 rounded-full border-[5px] ${ring}`} />
      <T className={`ml-[13px] ${nameClass}`}>{name}</T>
      <span className="ml-auto" />
      <T className={`font-bold ${valueClass}`}>{value}</T>
      <span className="-mt-[7px] ml-[45px] mr-[18px] flex gap-[14px]">
        <BellBlue />
        <Compass className="text-[#2b66d9]" />
      </span>
    </div>
  );
}

function Tooltip() {
  return (
    <div className="absolute left-[1282px] top-[191px] flex h-[313px] w-[672px] flex-col rounded-[8px] border-4 border-[#ccc] bg-white pl-[10px] text-[24px] text-[#444] shadow-[0_8px_16px_rgba(0,0,0,.28)]">
      <div className="mt-[10px] flex h-[46px] shrink-0 items-center">
        <T className="w-[291px] text-[28px] font-bold">2025-09-12 13:05 UTC</T>
      </div>
      <div className="mt-[11px] flex h-[48px] shrink-0 items-center">
        <span className="-ml-[4px] -mt-[4px] flex flex-col gap-[4px]">
          <span className="h-[8px] w-[8px] bg-[#2e73b8]" />
          <span className="h-[8px] w-[8px] bg-[#2e73b8]" />
          <span className="h-[8px] w-[8px] bg-[#2e73b8]" />
        </span>
        <T className="ml-[24px] w-[487px]">Deployment start - 2025-09-12 13:02:56 UTC</T>
      </div>
      <div className="flex h-[48px] shrink-0 items-center">
        <T className="ml-[28px] w-[480px]">Deployment end - 2025-09-12 13:15:50 UTC</T>
      </div>
      <TooltipRow n="1." ring="border-[#ee8636]" name="CPUUtilization Maximum" nameClass="w-[268px]" value="21.5352215767" valueClass="w-[167px]" />
      <TooltipRow n="2." ring="border-[#529d3e]" name="CPUUtilization Average" nameClass="w-[250px]" value="4.4543131272" valueClass="w-[153px]" />
      <TooltipRow n="3." ring="border-[#3b73af]" name="CPUUtilization Minimum" nameClass="w-[261px]" value="0" valueClass="w-[13px]" />
    </div>
  );
}

function HealthCard() {
  const blue = "bg-[#3b73af]";
  const orange = "bg-[#ee8636]";
  const green = "bg-[#529d3e]";
  return (
    <div className="mt-[40px] flex h-[968px] w-[2798px] flex-col rounded-[32px] border-2 border-[#c6c6cd] bg-white pl-[40px] pr-[40px] text-[#0f141a]">
      <div className="mt-[24px] flex h-[64px] shrink-0 items-center justify-between">
        <T className="w-[122px] text-[38px] font-bold">Health</T>
        <div className="flex h-[64px] w-[442px] items-center rounded-full border-4 border-[#2b66d9] text-[27px] font-bold text-[#2b66d9]">
          <T className="ml-[39px] w-[315px]">View Container Insights</T>
          <External className="ml-[16px]" />
        </div>
      </div>
      <div className="mt-[24px] flex h-[64px] shrink-0 items-center font-['Liberation_Sans',Arial,sans-serif] text-[28px]">
        <span className="relative h-[32px] w-[48px] shrink-0 rounded-full bg-[#424650]">
          <span className="absolute left-[4px] top-[4px] h-[24px] w-[24px] rounded-full bg-white" />
        </span>
        <T className="ml-[16px] w-[307px]">Alarm recommendations</T>
        <svg viewBox="0 0 24 32" className="ml-[8px] h-[32px] w-[24px] shrink-0" fill="none" stroke="#8e63d1" strokeWidth="3.600">
          <path d="M8 22q0-4-3-6a9 9 0 1 1 14 0q-3 2-3 6zM6.500 25.500h11M7.500 30h9" />
        </svg>
        <div className="ml-auto flex h-[42px] shrink-0 items-center border-b-2 border-dashed border-[#2b66d9] text-[#2b66d9]">
          <Info />
          <T className="ml-[8px] w-[247px]">Investigate with AI -</T>
          <T className="ml-[8px] w-[52px] italic">new</T>
        </div>
        <div className="mb-[4px] ml-[18px] flex h-[60px] w-[799px] shrink-0 items-center rounded-[16px] border-2 border-[#8c8c94]">
          <T className="ml-[34px] w-[30px]">1h</T>
          <T className="ml-[67px] w-[33px] font-bold text-[#2b66d9]">3h</T>
          <T className="ml-[68px] w-[46px]">12h</T>
          <T className="ml-[67px] w-[31px]">1d</T>
          <T className="ml-[68px] w-[31px]">3d</T>
          <T className="ml-[69px] w-[36px]">1w</T>
          <T className="ml-[51px] w-[99px] text-[#2b66d9]">Custom</T>
          <svg viewBox="0 0 28 28" className="ml-[18px] h-[28px] w-[28px]" fill="#2b66d9">
            <path fillRule="evenodd" d="M0 0h28v28H0zM3 4v21h22V4z" />
            {[7, 13, 19].map((y) => [5, 10, 15, 20].map((x) => <rect key={`${x}-${y}`} x={x} y={y} width="3.500" height="4" />))}
          </svg>
        </div>
        <div className="ml-[15px] flex h-[64px] w-[278px] shrink-0 items-center rounded-[16px] border-2 border-[#8c8c94]">
          <T className="ml-[24px] w-[177px]">UTC timezone</T>
          <Down className="ml-[21px] h-[17px] w-[21px] text-[#2b66d9]" />
        </div>
        <div className="ml-[16px] flex h-[64px] w-[140px] shrink-0 items-center rounded-full border-4 border-[#2b66d9] text-[#2b66d9]">
          <svg viewBox="0 0 32 32" className="ml-[20px] h-[32px] w-[32px]" fill="none" stroke="currentColor" strokeWidth="3.600">
            <path d="M29 17a13.500 13.500 0 1 1-3-9.500l3 4M29.500 1v11H19" />
          </svg>
          <span className="ml-[12px] h-[56px] w-[4px] bg-[#2b66d9]" />
          <Down className="ml-[16px] h-[16px] w-[20px]" />
        </div>
        <div className="ml-[16px] flex h-[64px] w-[332px] shrink-0 items-center rounded-full border-4 border-[#2b66d9] font-bold text-[#2b66d9]">
          <Compass className="ml-[32px]" />
          <T className="ml-[17px] w-[203px]">Explore related</T>
        </div>
        <Kebab className="ml-[28px] mr-[12px] text-[#424650]" />
      </div>
      <div className="relative ml-[16px] mt-[32px] flex shrink-0 gap-[16px] font-['Liberation_Sans',Arial,sans-serif]">
        <Widget
          title="CPU utilisation"
          titleClass="w-[180px]"
          expand
          legend={[
            ["CPUUtilization Minimum", blue, "w-[262px]"],
            ["CPUUtilization Maximum", orange, "w-[267px]"],
            ["CPUUtilization Average", green, "w-[250px]"],
          ]}
        >
          <Chart series={cpu} top="23" mid="11.5" cross />
        </Widget>
        <Widget
          title="Memory utilisation"
          titleClass="w-[222px]"
          legend={[
            ["MemoryUtilization Minimum", blue, "w-[299px]"],
            ["MemoryUtilization Maximum", orange, "w-[305px]"],
            ["MemoryUtilization Average", green, "w-[288px]"],
          ]}
        >
          <Chart series={memory} top="11.9" />
        </Widget>
        <Tooltip />
      </div>
    </div>
  );
}

function Footer() {
  return (
    <div className="relative flex h-[70px] shrink-0 items-center border-t-2 border-[#424650] bg-[#161d26] pt-[4px] text-[24px] font-medium text-[#ebebf0]">
      <span className="ml-[32px] h-[32px] w-[32px] rounded-[5px] border-4 border-[#ebebf0]" />
      <T className="ml-[12px] w-[124px]">CloudShell</T>
      <T className="ml-[40px] w-[98px]">Feedback</T>
      <T className="ml-auto w-[548px] font-normal text-[#c2c2ca]">© 2025, Amazon Web Services, Inc. or its affiliates.</T>
      <T className="ml-[61px] w-[78px]">Privacy</T>
      <T className="ml-[50px] w-[66px]">Terms</T>
      <T className="ml-[50px] mr-[33px] w-[206px]">Cookie preferences</T>
      <div className="absolute bottom-0 left-0 flex h-[41px] w-[1559px] items-center rounded-tr-[8px] bg-[#322f60] pl-[10px] font-['Inter',sans-serif] text-[24px] font-normal text-[#9f92dc] shadow-[0_0_4px_#000]">
        <T className="w-[1535px]">https://ap-southeast-2.console.aws.amazon.com/ecs/v2/clusters/devops-refresher-staging/services/app/health?region=ap-southeast-2</T>
      </div>
    </div>
  );
}

/* ---------- dock ---------- */

function AppIcon({ id, running, children, overflow }: { id: string; running?: boolean; children: ReactNode; overflow?: ReactNode }) {
  return (
    <div className="relative h-[104px] w-[104px] shrink-0">
      <svg viewBox="0 0 104 104" className="h-[104px] w-[104px] overflow-visible">
        <defs>
          <clipPath id={`clip-${id}`}>
            <rect width="104" height="104" rx="25" />
          </clipPath>
        </defs>
        <g clipPath={`url(#clip-${id})`}>{children}</g>
        {overflow}
      </svg>
      {running && <span className="absolute left-[48px] top-[124px] h-[8px] w-[8px] rounded-full bg-[#a9b0a0]" />}
    </div>
  );
}

function SlackMark() {
  return (
    <g>
      <g fill="#63c1ea">
        <path d="M50 31H42a8 8 0 1 1 8-8z" />
        <rect x="15" y="35" width="35" height="15" rx="7.500" />
      </g>
      <g fill="#55b37e">
        <rect x="53" y="16" width="16" height="34" rx="8" />
        <path d="M72 50V42a8 8 0 1 1 8 8z" />
      </g>
      <g fill="#cf3460">
        <path d="M31 54v8a8 8 0 1 1-8-8z" />
        <rect x="34" y="54" width="16" height="34" rx="8" />
      </g>
      <g fill="#e2b34b">
        <rect x="53" y="54" width="35" height="15" rx="7.500" />
        <path d="M53 73h8a8 8 0 1 1-8 8z" />
      </g>
    </g>
  );
}

function CursorMark() {
  return (
    <g>
      <rect width="104" height="104" fill="#000" />
      <path d="M52 15 83 33v37L52 88 21 70V33z" fill="#555" />
      <path d="M52 15v18H21z" fill="#4a4a4a" />
      <path d="M52 15v18h31z" fill="#2c2c2c" />
      <path d="M21 33v37l31-19z" fill="#3c3c3c" />
      <path d="M21 70 52 51v37z" fill="#b5b5b5" />
      <path d="M83 33v37L68 60z" fill="#333" />
      <path d="M83 70 52 88l14-28z" fill="#c4c4c4" />
      <path d="M21 33h62L52 51z" fill="#fff" />
      <path d="M83 33 52 88V51z" fill="#e2e2e2" />
    </g>
  );
}

function Dock() {
  return (
    <div className="relative ml-[233px] mt-[2px] flex h-[158px] w-[2990px] shrink-0 items-start rounded-[52px] border-2 border-[#52564b] bg-[linear-gradient(90deg,#1f2a1c_0%,#202b24_16%,#262f22_26%,#303b22_36%,#28231a_50%,#2a201a_66%,#27302a_80%,#2d2e24_88%,#57402a_95%,#37322b_100%)] pl-[19px] pt-[20px]">
      <div className="flex gap-[32px]">
        <AppIcon id="finder" running>
          <defs>
            <linearGradient id="fg" x1="0" y1="0" x2="0" y2="1">
              <stop offset="0" stopColor="#5cc5fa" />
              <stop offset="1" stopColor="#3267f0" />
            </linearGradient>
          </defs>
          <rect width="104" height="104" fill="#e6e8ee" />
          <path d="M0 0h57Q46 28 45 60h14q0 26 6 44H0z" fill="url(#fg)" />
          <path d="M28 30v9M76 30v9" stroke="#20242c" strokeWidth="5" strokeLinecap="round" />
          <path d="M21 69q31 26 62 0" fill="none" stroke="#20242c" strokeWidth="4" strokeLinecap="round" />
        </AppIcon>
        <AppIcon id="launchpad">
          <rect width="104" height="104" fill="#b6bbb6" />
          {["#77e35a", "#f5b93c", "#e8822e", "#c92f22", "#9aa0a2", "#ee4b60", "#9340c8", "#3a8cf0", "#66cfab"].map((c, i) => (
            <rect key={c} x={17 + (i % 3) * 25} y={17 + Math.floor(i / 3) * 25} width="20" height="20" rx="5" fill={c} />
          ))}
        </AppIcon>
        <AppIcon id="calendar">
          <rect width="104" height="104" fill="#f8f7f5" />
          <rect width="104" height="32" fill="#e25f54" />
          <text x="52" y="24" fontSize="20" fontWeight="700" fill="#fff" textAnchor="middle" fontFamily="Inter, sans-serif" textLength="40">
            SEP
          </text>
          <text x="51" y="87" fontSize="64" fontWeight="300" fill="#222" textAnchor="middle" fontFamily="Inter, sans-serif" textLength="62" lengthAdjust="spacingAndGlyphs">
            12
          </text>
        </AppIcon>
        <AppIcon id="notes">
          <rect width="104" height="104" fill="#f0efec" />
          <rect width="104" height="27" fill="#f8cf4e" />
          <path d="M0 27h104" stroke="#c9a43c" strokeWidth="1.500" />
          <path d="M2 31.500h102" stroke="#b5b2a8" strokeWidth="2" strokeDasharray="2 3" />
          <path d="M0 51h104M0 77h104" stroke="#cfcdcb" strokeWidth="2" />
        </AppIcon>
        <AppIcon id="freeform">
          <rect width="104" height="104" fill="#fff" />
          <circle cx="41" cy="62" r="30" fill="#f07d5e" />
          <path d="M14 50a30 30 0 0 1 52 -4L40 62z" fill="#f2a145" opacity=".8" />
          <rect x="34" y="13" width="56" height="56" rx="5" fill="#58bfe8" opacity=".92" />
          <path d="M20 66Q32 38 39 37t2 18q5 10 15-14 4-5 5 4t3 16q7 2 12-11 2 12 5 12 5 0 11-14" fill="none" stroke="#14456e" strokeWidth="5" strokeLinecap="round" strokeLinejoin="round" />
        </AppIcon>
        <AppIcon id="settings">
          <defs>
            <linearGradient id="sg" x1="0" y1="0" x2="0" y2="1">
              <stop offset="0" stopColor="#d6dfe6" />
              <stop offset="1" stopColor="#8f8e8c" />
            </linearGradient>
          </defs>
          <rect width="104" height="104" fill="url(#sg)" />
          <circle cx="52" cy="52" r="44" fill="#2e2f31" />
          <circle cx="52" cy="52" r="40" fill="none" stroke="#9a9b9d" strokeWidth="5" strokeDasharray="2.500 2" />
          <circle cx="52" cy="52" r="34" fill="none" stroke="#8b8d90" strokeWidth="5" />
          <circle cx="52" cy="52" r="22" fill="none" stroke="#77797c" strokeWidth="7" strokeDasharray="3 1.500" />
          <path d="M52 52h32M52 52 36 24M52 52 36 80" stroke="#b5b7ba" strokeWidth="4.500" />
          <circle cx="52" cy="52" r="5" fill="#a9abae" />
        </AppIcon>
        <AppIcon id="slack" running>
          <rect width="104" height="104" fill="#fdfdfd" />
          <SlackMark />
        </AppIcon>
        <AppIcon id="chrome" running>
          <rect width="104" height="104" fill="#f4f3f2" />
          <circle cx="52" cy="52" r="44" fill="#f3bf44" />
          <path d="M52 52 14 30a44 44 0 0 1 76 0H52z" fill="#db5140" />
          <path d="M14 29.500A44 44 0 0 0 51 96l20-33-19-11-19 11z" fill="#4fa055" />
          <path d="M52 30h38.500A44 44 0 0 1 51 96l21-34z" fill="#f3bf44" />
          <circle cx="52" cy="52" r="21" fill="#fff" />
          <circle cx="52" cy="52" r="17.500" fill="#4381ee" />
        </AppIcon>
        <AppIcon id="ghost" running>
          <rect width="104" height="104" fill="#c9c9c9" />
          <rect x="4" y="6" width="96" height="93" rx="21" fill="#111" />
          <rect x="10" y="12" width="84" height="82" rx="15" fill="#141c9c" />
          <path d="M10 12h84v30Q60 34 10 30z" fill="#33437e" opacity=".8" />
          <path d="M17 33a14.500 15 0 0 1 29 0v18l-5-2-5 3-5-3-5 3-4-3-5 2z" fill="#b5d6fb" />
          <path d="m21 26 6 4-6 4M32 31h8" fill="none" stroke="#0e1238" strokeWidth="3.500" />
        </AppIcon>
        <AppIcon id="cursor1">
          <CursorMark />
        </AppIcon>
        <AppIcon id="zoom" running>
          <defs>
            <linearGradient id="zg" x1="1" y1="0" x2="0" y2="1">
              <stop offset="0" stopColor="#3f86ea" />
              <stop offset=".35" stopColor="#2459ee" />
              <stop offset="1" stopColor="#1b45b8" />
            </linearGradient>
          </defs>
          <rect width="104" height="104" fill="url(#zg)" />
          <text x="52" y="60" fontSize="28" fontWeight="600" fill="#fff" textAnchor="middle" fontFamily="Inter, sans-serif" textLength="72">
            zoom
          </text>
        </AppIcon>
        <AppIcon id="obsidian" running>
          <rect width="104" height="104" fill="#212123" />
          <path d="M52 8q4 0 7 4l13 21 3 20 8 9-7 22-4 8q-3 4-9 0L35 87 18 66q-2-5 1-10l9-14 3-17z" fill="#7a4fd0" />
          <path d="M52 8 31 25l-3 17q14 6 12 18l10-2q5-22 1-38z" fill="#c9b5f2" />
          <path d="M52 8q4 0 7 4l13 21 3 20 8 9-6 10Q62 50 50 58q0-20 2-50z" fill="#9069e0" />
          <path d="M28 42 18 60v8l18 18q6-20 3-30z" fill="#5a30b4" />
          <path d="M40 60q20-4 37 14l-5 14q-3 6-12 3L36 86z" fill="#5a32b0" />
        </AppIcon>
        <AppIcon id="orb" running>
          <defs>
            <linearGradient id="og" x1="0" y1="0" x2="0" y2="1">
              <stop offset="0" stopColor="#c5dffb" />
              <stop offset="1" stopColor="#b3b6f7" />
            </linearGradient>
            <radialGradient id="ob" cx=".55" cy=".5" r=".55">
              <stop offset="0" stopColor="#6350d8" />
              <stop offset=".5" stopColor="#8f7fe6" />
              <stop offset=".8" stopColor="#a270e0" />
              <stop offset="1" stopColor="#6f45b8" />
            </radialGradient>
            <radialGradient id="op" cx=".45" cy=".8" r=".4">
              <stop offset="0" stopColor="#b13cc8" />
              <stop offset="1" stopColor="#b13cc8" stopOpacity="0" />
            </radialGradient>
          </defs>
          <rect width="104" height="104" fill="url(#og)" />
          <circle cx="52" cy="52" r="37" fill="url(#ob)" />
          <circle cx="52" cy="52" r="37" fill="url(#op)" />
        </AppIcon>
        <AppIcon
          id="gimp"
          overflow={
            <g>
              <path d="M47-9h9v7h8v6H40v-6h7z" fill="#cf9c58" />
              <rect x="17" y="97" width="70" height="10" rx="2" fill="#d9aa66" />
              <path d="M20 107h8l-3 8h-8zM78 107h8l2 8h-8zM47 107h9v5h-9z" fill="#b9854a" />
            </g>
          }
        >
          <rect width="104" height="104" fill="#f7f7f7" />
          <path d="M27 22q8 14 20 14 32 0 48-26 3 30 0 46-8 26-42 27Q22 78 24 48q0-14 3-26z" fill="#8a8075" />
          <ellipse cx="12" cy="49" rx="9" ry="11.500" fill="#000" />
          <circle cx="11" cy="43" r="4.500" fill="#fff" />
          <ellipse cx="38" cy="47" rx="11" ry="13" fill="#fff" />
          <ellipse cx="62" cy="47" rx="13" ry="14" fill="#fff" />
          <ellipse cx="40" cy="48" rx="6" ry="8" fill="#000" />
          <ellipse cx="63" cy="48" rx="8" ry="9" fill="#000" />
          <circle cx="40" cy="43" r="3.500" fill="#fff" />
          <circle cx="62" cy="42" r="4" fill="#fff" />
          <path d="M43 75q26 6 33-10" fill="none" stroke="#000" strokeWidth="3" />
          <path d="m68 74 6-4 12 10-5 6z" fill="#e8862e" />
          <path d="M82 80q10-4 14 10l-2 6q-12-2-12-16z" fill="#111" />
        </AppIcon>
        <AppIcon id="vscode">
          <rect width="104" height="104" fill="#fff" />
          <path d="M68 16v20L24 70q-3 2-5-1l-5-6q-1-3 1-5z" fill="#2560a4" />
          <path d="M68 88V68L24 34q-3-2-5 1l-5 6q-1 3 1 5z" fill="#3277c8" />
          <path d="m68 16 17 8q2 1 2 4v48q0 3-2 4l-17 8z" fill="#4795ea" />
        </AppIcon>
      </div>
      <span className="ml-[47px] mt-[-2px] h-[118px] w-[2px] bg-[#5a564c]" />
      <div className="ml-[46px] flex gap-[32px]">
        <AppIcon id="stickies" running>
          <rect width="104" height="104" fill="#d6bb56" />
          <path d="M0 0h104v62Q94 92 62 94H20Q4 92 0 75z" fill="#f8ec9a" />
          <path d="M20 36q3-22 7-18t0 16q9-18 12-10 0 8 2 10 8-8 14-4l6 2h26" fill="none" stroke="#dcc75c" strokeWidth="5" />
          <path d="M17 50h70M17 69h38" stroke="#dcc75c" strokeWidth="6" />
        </AppIcon>
        <AppIcon id="cursor2" running>
          <CursorMark />
        </AppIcon>
        <AppIcon
          id="preview"
          overflow={
            <g>
              <path d="M60 72h32l13 31q2 6-4 6H51q-6 0-4-6z" fill="#c4cacb" fillOpacity=".85" stroke="#8e9698" strokeWidth="2" />
              <ellipse cx="76" cy="101" rx="19" ry="5.500" fill="#eee" />
              <rect x="54" y="52" width="45" height="21" rx="6" fill="#1b1b1b" />
              <ellipse cx="76" cy="54" rx="21" ry="4" fill="#333" />
            </g>
          }
        >
          <rect width="104" height="104" fill="#f2f1f0" />
          <rect x="8" y="8" width="88" height="88" rx="18" fill="#9dbcf0" />
          <rect x="8" y="55" width="88" height="18" fill="#2a3f7c" />
          <path d="M8 72q12-6 22-2t20 8l10 10-4 8H26Q8 96 8 80z" fill="#7d6a5a" />
          <path d="M8 72q10 2 16 8t20-2" fill="none" stroke="#e8eef5" strokeWidth="5" />
        </AppIcon>
      </div>
      <span className="ml-[46px] mt-[-2px] h-[118px] w-[2px] bg-[#5a564c]" />
      <svg viewBox="0 0 108 114" className="ml-[43px] mt-[-10px] h-[114px] w-[108px] shrink-0">
        <rect x="11" y="1" width="86" height="60" fill="#fff" />
        <rect x="14" y="4" width="80" height="56" fill="#140f33" />
        <path d="M20 10h40l24 26v20H20z" fill="#eee" />
        <path d="M54 10v30" stroke="#666" strokeWidth="7" strokeDasharray="3 2" />
        <path d="M0 32q0-8 8-8h24q5 0 8 5l3 4h57q8 0 8 8v64q0 8-8 8H8q-8 0-8-8z" fill="#4a9fdc" />
        <path d="M0 47q0-8 8-8h92q8 0 8 8v58q0 8-8 8H8q-8 0-8-8z" fill="#74c6f7" />
      </svg>
      <svg viewBox="0 0 120 94" className="ml-[22px] mt-[16px] h-[94px] w-[120px] shrink-0">
        <rect width="120" height="70" fill="#16181e" />
        <rect width="120" height="3" fill="#2a2c55" />
        <rect width="32" height="70" fill="#0d0f2e" />
        <rect x="4" y="64" width="28" height="3" fill="#2c3fb0" />
        <path d="M8 9h8M8 14h12M8 19h9M8 24h12M8 29h14M8 34h10M8 39h12M8 44h13M8 49h10M8 54h12" stroke="#4a4d6d" strokeWidth="1.500" />
        <path d="M38 10h40M38 16h14M38 20h36M38 27h22M38 31h34M38 38h16M38 42h24M38 50h20M38 55h12M38 60h18" stroke="#585b63" strokeWidth="1.500" />
        <rect x="78" y="54" width="38" height="39" rx="9" fill="#fff" />
        <g transform="translate(78 54) scale(.366)">
          <SlackMark />
        </g>
      </svg>
      <svg viewBox="0 0 92 120" className="ml-[30px] mt-[-10px] h-[120px] w-[92px] shrink-0">
        <defs>
          <linearGradient id="tg" x1="0" y1="0" x2="1" y2="0">
            <stop offset="0" stopColor="#868a8b" />
            <stop offset=".5" stopColor="#70787a" />
            <stop offset="1" stopColor="#9a9d9d" />
          </linearGradient>
        </defs>
        <path d="M1 18h90l-9 92q-2 8-36 8t-36-8z" fill="url(#tg)" />
        <ellipse cx="46" cy="18" rx="45" ry="10" fill="#5c6162" />
        <path d="M8 20 14 4l12 2 6-6 10 8 10-6 10 5 12 2 6 14-14 5-14-4-12 5-14-4z" fill="#dcdcdc" />
        <path d="m28 12 12 4-4 8zM58 10l8 10-10 2z" fill="#6a7d8c" />
        <path d="m40 12 8 4-8 3z" fill="#45b36b" />
        <path d="m16 12 8 10M66 6l8 14" stroke="#8a8a8a" strokeWidth="2" />
      </svg>
    </div>
  );
}

/* Dark, leafy desktop picture that shows around the dock. */
function Wallpaper() {
  return (
    <svg viewBox="0 0 3456 180" className="absolute bottom-0 left-0 h-[180px] w-[3456px]" preserveAspectRatio="none">
      <defs>
        <linearGradient id="wall" x1="0" y1="0" x2="1" y2="0">
          <stop offset="0" stopColor="#26371c" />
          <stop offset=".2" stopColor="#3d4c2c" />
          <stop offset=".42" stopColor="#424c2a" />
          <stop offset=".5" stopColor="#3a2a1c" />
          <stop offset=".72" stopColor="#35221a" />
          <stop offset=".86" stopColor="#4f3624" />
          <stop offset=".885" stopColor="#a56a44" />
          <stop offset=".91" stopColor="#33281f" />
          <stop offset=".95" stopColor="#1b2628" />
          <stop offset="1" stopColor="#141d20" />
        </linearGradient>
        <linearGradient id="shade" x1="0" y1="0" x2="0" y2="1">
          <stop offset="0" stopColor="#000" stopOpacity=".95" />
          <stop offset=".5" stopColor="#000" stopOpacity=".6" />
          <stop offset="1" stopColor="#000" stopOpacity=".1" />
        </linearGradient>
        <filter id="leaves" x="0" y="0" width="100%" height="100%">
          <feTurbulence type="fractalNoise" baseFrequency=".05 .03" numOctaves="3" seed="4" />
          <feColorMatrix values="0 0 0 0 0  0 0 0 0 0  0 0 0 0 0  2.6 0 0 0 -0.9" />
        </filter>
      </defs>
      <rect width="3456" height="180" fill="url(#wall)" />
      <rect width="3456" height="180" filter="url(#leaves)" />
      <rect width="3456" height="180" fill="url(#shade)" />
    </svg>
  );
}

export default function App() {
  return (
    <div className="relative flex h-[2234px] w-[3456px] flex-col overflow-hidden bg-[#060805] font-['Noto_Sans','Open_Sans',sans-serif]">
      <Wallpaper />
      <MenuBar />
      <div className="relative mt-[2px] flex h-[1988px] w-full shrink-0 flex-col overflow-hidden rounded-[20px]">
        <TabStrip />
        <Toolbar />
        <div className="h-[2px] shrink-0 bg-[#3b3569]" />
        <div className="h-[2px] shrink-0 bg-[#474c58]" />
        <div className="h-[6px] shrink-0 bg-[#7f8896]" />
        <AwsHeader />
        <Favourites />
        <Breadcrumbs />
        <div className="flex h-[1488px] shrink-0 bg-[#fbfbfc]">
          <Sidebar />
          <div className="flex flex-col pl-[48px]">
            <LoadBalancerCard />
            <HealthCard />
          </div>
        </div>
        <Footer />
        <div className="pointer-events-none absolute inset-0 rounded-[20px] border-2 border-white/20" />
      </div>
      <Dock />
    </div>
  );
}
